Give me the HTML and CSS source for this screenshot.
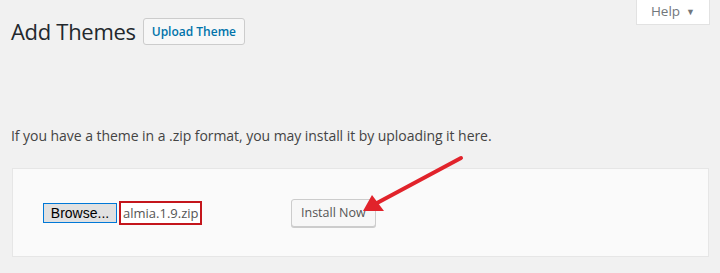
FILE: index.html
```html
<!DOCTYPE html>
<html>
<head>
<meta charset="utf-8">
<link rel="stylesheet" href="styles.css">
</head>
<body>
<div class="meta-links">
  <button class="help-tab">Help <span class="caret">&#9660;</span></button>
</div>
<div class="wrap">
  <div class="heading">
    <h1 class="title">Add Themes</h1>
    <a class="upload-btn">Upload Theme</a>
  </div>
  <p class="intro">If you have a theme in a .zip format, you may install it by uploading it here.</p>
  <div class="upload-card">
    <div class="file-input">
      <span class="browse">Browse...</span>
      <span class="filename">almia.1.9.zip</span>
    </div>
    <button class="install-btn">Install Now</button>
  </div>
</div>
<svg class="arrow" width="720" height="273" viewBox="0 0 720 273">
  <line x1="461" y1="158" x2="377" y2="203" stroke="#e1232b" stroke-width="4" stroke-linecap="round"/>
  <polygon points="363,211 372,195 384,211" fill="#e1232b"/>
</svg>
</body>
</html>
```
FILE: styles.css
```css
html, body {
  margin: 0;
  padding: 0;
  background: #f1f1f1;
  font-family: "Open Sans", "Noto Sans", sans-serif;
  color: #444;
  width: 720px;
  height: 273px;
  overflow: hidden;
  position: relative;
}

.meta-links {
  float: right;
  margin-right: 10px;
}

.help-tab {
  display: flex;
  align-items: center;
  gap: 6px;
  height: 25px;
  box-sizing: border-box;
  padding: 0 14px 2px 14px;
  background: #fff;
  border: 1px solid #e2e2e2;
  border-top: none;
  font-family: inherit;
  font-size: 13.5px;
  color: #72777c;
}

.caret {
  font-size: 9px;
  color: #72777c;
}

.wrap {
  padding: 17px 11px 0 11px;
}

.heading {
  display: flex;
  align-items: center;
  gap: 7px;
}

.title {
  margin: 0;
  font-size: 22px;
  font-weight: 400;
  line-height: 28px;
  color: #23282d;
  letter-spacing: -0.3px;
}

.upload-btn {
  display: inline-flex;
  align-items: center;
  height: 27px;
  box-sizing: border-box;
  padding: 0 8px;
  border: 1px solid #ccc;
  border-radius: 3px;
  background: #f7f7f7;
  font-size: 12px;
  font-weight: 600;
  color: #0073aa;
}

.intro {
  margin: 0;
  padding-top: 81px;
  font-size: 14px;
  line-height: 20px;
  color: #444;
  letter-spacing: -0.05px;
}

.upload-card {
  margin: 22px 0 0 1px;
  height: 89px;
  box-sizing: border-box;
  background: #fafafa;
  border: 1px solid #e6e6e6;
  display: flex;
  align-items: center;
  padding-left: 30px;
}

.file-input {
  display: flex;
  align-items: center;
  gap: 2px;
  width: 248px;
}

.browse {
  box-sizing: border-box;
  width: 74px;
  height: 20px;
  text-align: center;
  background: #e1e1e1;
  border: 1px solid #0078d7;
  font-family: "Liberation Sans", Arial, sans-serif;
  font-size: 14px;
  line-height: 18px;
  color: #000;
}

.filename {
  box-sizing: border-box;
  height: 24px;
  width: 83px;
  padding: 0 2px;
  border: 2px solid #c4161c;
  background: #fff;
  font-size: 13px;
  line-height: 20px;
  color: #555;
  white-space: nowrap;
}

.install-btn {
  height: 28px;
  box-sizing: border-box;
  padding: 0 9px;
  border: 1px solid #ccc;
  border-radius: 3px;
  background: #f7f7f7;
  box-shadow: 0 1px 0 #ccc;
  font-family: inherit;
  font-size: 12.5px;
  color: #555;
}

.arrow {
  position: absolute;
  left: 0;
  top: 0;
  pointer-events: none;
}
```
